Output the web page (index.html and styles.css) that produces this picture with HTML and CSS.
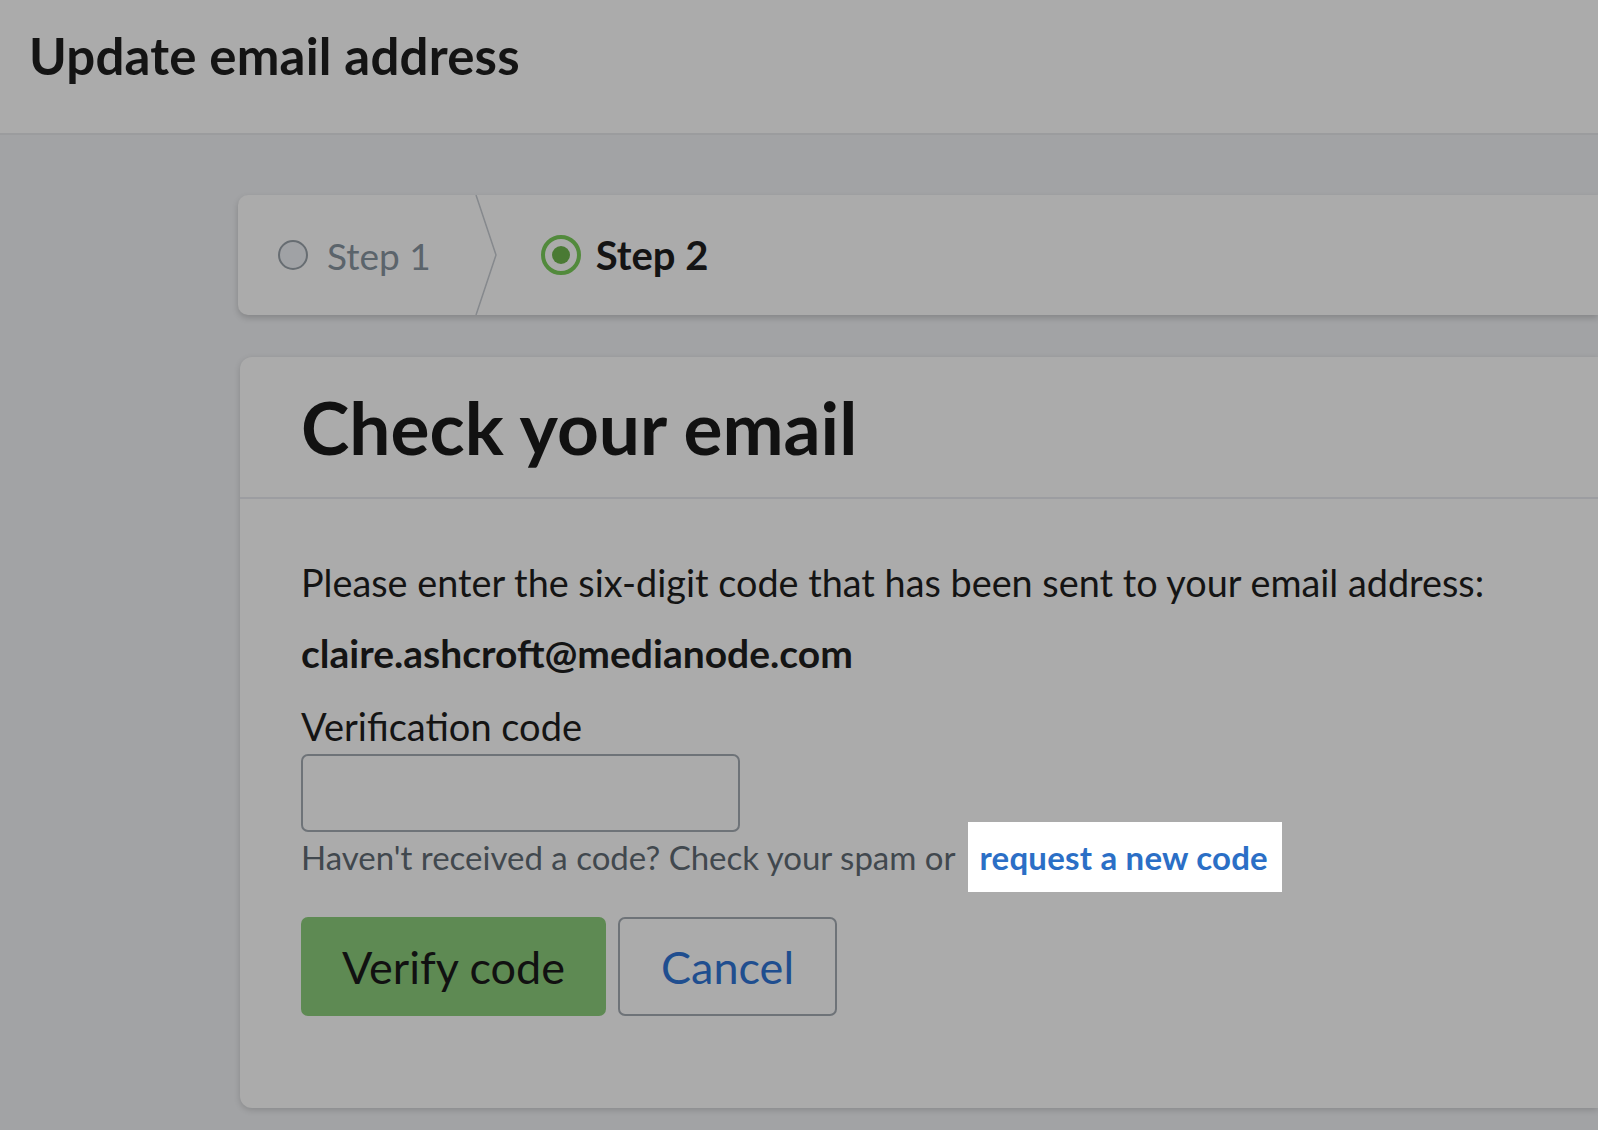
FILE: index.html
```html
<!DOCTYPE html>
<html lang="en">
<head>
<meta charset="utf-8">
<title>Update email address</title>
<link rel="stylesheet" href="styles.css">
</head>
<body>
<header class="topbar">
  <h1 class="page-title">Update email address</h1>
</header>
<main class="main">
  <nav class="steps">
    <div class="step step-done">
      <span class="dot dot-idle"></span>
      <span class="step-label">Step 1</span>
    </div>
    <svg class="chevron" width="22" height="120" viewBox="0 0 22 120" aria-hidden="true">
      <polyline points="1,0 21,60 1,120" fill="none" stroke="#86898d" stroke-width="1.5"/>
    </svg>
    <div class="step step-current">
      <span class="dot dot-active"><span class="dot-core"></span></span>
      <span class="step-label">Step 2</span>
    </div>
  </nav>
  <section class="card">
    <div class="card-head">
      <h2 class="card-title">Check your email</h2>
    </div>
    <div class="card-body">
      <p class="intro">Please enter the six-digit code that has been sent to your email address:</p>
      <p class="email">claire.ashcroft@medianode.com</p>
      <label class="field-label" for="code">Verification code</label>
      <input class="field-input" id="code" type="text">
      <div class="help">
        <span class="help-text">Haven't received a code? Check your spam or</span>
        <a class="help-link" href="#">request a new code</a>
      </div>
      <div class="actions">
        <button class="btn btn-primary" type="button">Verify code</button>
        <button class="btn btn-secondary" type="button">Cancel</button>
      </div>
    </div>
  </section>
</main>
</body>
</html>
```
FILE: styles.css
```css
* { box-sizing: border-box; }
html, body {
  margin: 0;
  padding: 0;
}
body {
  background: #a2a3a5;
  font-family: Lato, "Noto Sans", sans-serif;
  color: #141414;
  overflow: hidden;
  min-height: 1130px;
}
.topbar {
  height: 135px;
  background: #ababab;
  border-bottom: 2px solid #9b9c9e;
  display: flex;
  align-items: center;
  padding-left: 29px;
  padding-bottom: 22px;
}
.page-title {
  margin: 0;
  font-size: 51px;
  font-weight: 700;
  color: #141414;
  letter-spacing: 0.2px;
}
.main {
  padding: 60px 0 0 238px;
}
.steps {
  display: flex;
  align-items: center;
  height: 120px;
  background: #ababab;
  border-radius: 10px 0 0 10px;
  box-shadow: 0 3px 6px rgba(0,0,0,0.18);
  padding-left: 40px;
}
.step {
  display: flex;
  align-items: center;
}
.step-label {
  font-size: 37px;
}
.step-done .step-label {
  color: #5b646b;
  margin-left: 19px;
  margin-right: 44px;
}
.step-current .step-label {
  color: #141414;
  font-weight: 700;
  font-size: 40px;
  margin-left: 15px;
}
.chevron {
  flex: none;
  display: block;
  margin-right: 44px;
}
.dot {
  display: inline-block;
  border-radius: 50%;
  flex: none;
}
.dot-idle {
  width: 30px;
  height: 30px;
  background: #a0a2a5;
  border: 2px solid #676d72;
}
.dot-active {
  width: 40px;
  height: 40px;
  border: 4px solid #528a3c;
  display: flex;
  align-items: center;
  justify-content: center;
}
.dot-core {
  width: 18px;
  height: 18px;
  border-radius: 50%;
  background: #4a7a34;
}
.card {
  margin-top: 42px;
  margin-left: 2px;
  background: #ababab;
  border-radius: 12px 0 0 12px;
  box-shadow: 0 2px 6px rgba(0,0,0,0.16);
}
.card-head {
  height: 142px;
  border-bottom: 2px solid #9c9da1;
  padding-left: 61px;
  display: flex;
  align-items: center;
}
.card-title {
  margin: 0;
  font-size: 73px;
  font-weight: 700;
  color: #111;
}
.card-body {
  padding: 60px 0 92px 61px;
}
.intro {
  margin: 0;
  font-size: 37.8px;
  line-height: 48px;
}
.email {
  margin: 22px 0 0;
  font-size: 39px;
  line-height: 48px;
  font-weight: 700;
}
.field-label {
  display: block;
  margin-top: 25px;
  font-size: 38px;
  line-height: 48px;
}
.field-input {
  display: block;
  width: 439px;
  height: 78px;
  margin-top: 4px;
  background: transparent;
  border: 2px solid #6e7378;
  border-radius: 7px;
  font: inherit;
}
.help {
  display: flex;
  align-items: center;
  margin-top: -10px;
  height: 70px;
}
.help-text {
  font-size: 33px;
  color: #41484e;
}
.help-link {
  margin-left: 12px;
  height: 70px;
  display: flex;
  align-items: center;
  padding: 0 14px 0 12px;
  background: #ffffff;
  color: #2b6fc6;
  font-size: 33px;
  font-weight: 700;
  text-decoration: none;
  letter-spacing: 0.2px;
}
.actions {
  display: flex;
  gap: 12px;
  margin-top: 25px;
}
.btn {
  height: 99px;
  border-radius: 7px;
  font-family: inherit;
  font-size: 45px;
  font-weight: 400;
  cursor: pointer;
}
.btn-primary {
  width: 305px;
  background: #5e8a53;
  border: 2px solid #5e8a53;
  color: #111;
}
.btn-secondary {
  width: 219px;
  background: transparent;
  border: 2px solid #6e7378;
  color: #1f4e8f;
}
```
